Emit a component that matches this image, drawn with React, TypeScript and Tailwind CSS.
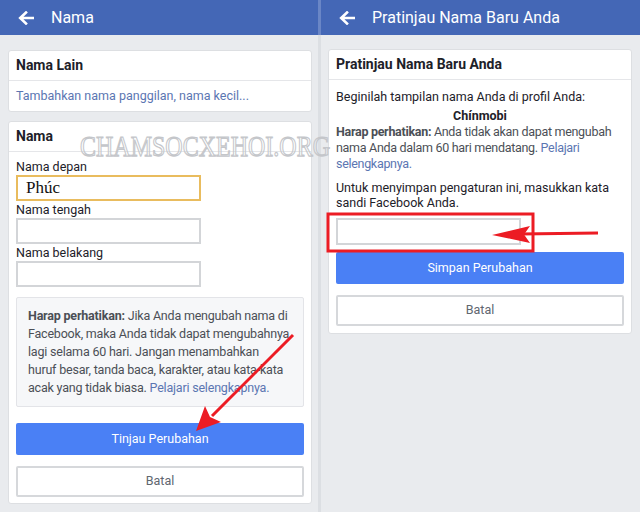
import { ReactNode } from "react"

const font = { fontFamily: "Roboto, 'Noto Sans', Arial, sans-serif" }

function BackArrow() {
  return (
    <svg className="w-[16px] h-[14px]" viewBox="0 0 16 14" fill="none">
      <path d="M15 7H3M8 1.5L2.2 7 8 12.5" stroke="white" strokeWidth={2.6} strokeLinecap="square" />
    </svg>
  )
}

function Header({ title }: { title: string }) {
  return (
    <div className="h-[35px] shrink-0 bg-[#4467b6] flex items-center pl-[18px]">
      <BackArrow />
      <span className="ml-[17px] text-white text-[16px] leading-none">{title}</span>
    </div>
  )
}

function Card({ title, children, className = "" }: { title: string; children: ReactNode; className?: string }) {
  return (
    <div className={`shrink-0 bg-white border border-[#dddfe2] rounded-[3px] w-[304px] ${className}`}>
      <div className="h-[30px] flex items-center px-[7px] border-b border-[#e5e6e9] text-[14px] font-bold text-[#1d2129]">
        {title}
      </div>
      {children}
    </div>
  )
}

function Field({ label, value, focus }: { label: string; value?: string; focus?: boolean }) {
  return (
    <div>
      <div className="h-[17px] leading-[17px] text-[12.5px] text-[#1d2129]">{label}</div>
      <div
        className={`w-[185px] h-[26px] border-2 flex items-center pl-[8px] ${
          focus ? "border-[#e9bc5e]" : "border-[#d3d5d8]"
        }`}
      >
        {value && <span className="text-[17px] text-[#111] font-['Liberation_Serif',serif]">{value}</span>}
      </div>
    </div>
  )
}

function BlueButton({ label }: { label: string }) {
  return (
    <div className="h-[32px] bg-[#4a80f5] rounded-[2px] flex items-center justify-center text-white text-[12.5px]">
      {label}
    </div>
  )
}

function GhostButton({ label }: { label: string }) {
  return (
    <div className="h-[31px] border-2 border-[#d6d8db] rounded-[2px] bg-white flex items-center justify-center text-[#606770] text-[12.5px]">
      {label}
    </div>
  )
}

export default function App() {
  return (
    <div className="relative w-[640px] h-[512px] bg-[#e9ebee] flex overflow-hidden" style={font}>
      {/* left screen */}
      <div className="w-[318px] shrink-0 flex flex-col">
        <Header title="Nama" />
        <Card title="Nama Lain" className="ml-[8px] mt-[15px]">
          <div className="h-[30px] flex items-center px-[7px] text-[12.5px] text-[#5b76b2]">
            Tambahkan nama panggilan, nama kecil...
          </div>
        </Card>
        <Card title="Nama" className="ml-[8px] mt-[9px]">
          <div className="px-[7px] pt-[6px] pb-[6px]">
            <Field label="Nama depan" value="Phúc" focus />
            <Field label="Nama tengah" />
            <Field label="Nama belakang" />
            <div className="mt-[10px] bg-[#f6f7f9] border border-[#e3e4e8] rounded-[2px] pl-[11px] pr-[4px] py-[9px] text-[12.5px] leading-[18px] tracking-[-0.2px] text-[#4b4f56] whitespace-nowrap">
              <span className="font-bold">Harap perhatikan:</span> Jika Anda mengubah nama di
              <br />
              Facebook, maka Anda tidak dapat mengubahnya
              <br />
              lagi selama 60 hari. Jangan menambahkan
              <br />
              huruf besar, tanda baca, karakter, atau kata-kata
              <br />
              acak yang tidak biasa. <span className="text-[#5b76b2]">Pelajari selengkapnya.</span>
            </div>
            <div className="mt-[16px]">
              <BlueButton label="Tinjau Perubahan" />
            </div>
            <div className="mt-[11px]">
              <GhostButton label="Batal" />
            </div>
          </div>
        </Card>
      </div>

      {/* divider */}
      <div className="w-[3px] shrink-0 flex flex-col">
        <div className="h-[35px] bg-[#6a86c6]" />
        <div className="flex-1 bg-[#dcdfe3]" />
      </div>

      {/* right screen */}
      <div className="flex-1 flex flex-col">
        <Header title="Pratinjau Nama Baru Anda" />
        <Card title="Pratinjau Nama Baru Anda" className="ml-[7px] mt-[14px]">
          <div className="px-[7px] pt-[9px] pb-[7px] text-[12.5px] text-[#1d2129]">
            <div className="leading-[16px]">Beginilah tampilan nama Anda di profil Anda:</div>
            <div className="leading-[16px] mt-[3px] text-center font-bold">Chínmobi</div>
            <div className="leading-[16px] text-[#4b4f56] tracking-[-0.3px] whitespace-nowrap">
              <span className="font-bold">Harap perhatikan:</span> Anda tidak akan dapat mengubah
              <br />
              nama Anda dalam 60 hari mendatang. <span className="text-[#5b76b2]">Pelajari</span>
              <br />
              <span className="text-[#5b76b2]">selengkapnya.</span>
            </div>
            <div className="leading-[15px] mt-[8px] whitespace-nowrap">
              Untuk menyimpan pengaturan ini, masukkan kata
              <br />
              sandi Facebook Anda.
            </div>
            <div className="mt-[8px] w-[185px] h-[27px] border-2 border-[#d3d5d8]" />
            <div className="mt-[7px]">
              <BlueButton label="Simpan Perubahan" />
            </div>
            <div className="mt-[11px]">
              <GhostButton label="Batal" />
            </div>
          </div>
        </Card>
      </div>

      {/* watermark */}
      <div className="absolute left-[80px] top-[134px] pointer-events-none">
        <span className="inline-block scale-y-125 text-[24px] leading-none text-transparent font-['Liberation_Serif',serif] [-webkit-text-stroke:1px_#c4c6ca]">
          CHAMSOCXEHOI.ORG
        </span>
      </div>

      {/* annotations */}
      <svg className="absolute inset-0 pointer-events-none" width={640} height={512} viewBox="0 0 640 512">
        <rect x={328} y={214} width={205} height={37} fill="none" stroke="#ec1c24" strokeWidth={3} />
        <line x1={598} y1={233} x2={520} y2={234} stroke="#ec1c24" strokeWidth={3} />
        <path d="M492 235 L530 226 L524 234.5 L530 243 Z" fill="#ec1c24" />
        <line x1={293} y1={335} x2={212} y2={416} stroke="#ec1c24" strokeWidth={3} />
        <path d="M196 431 L205 406 L210 417 L221 422 Z" fill="#ec1c24" />
      </svg>
    </div>
  )
}
